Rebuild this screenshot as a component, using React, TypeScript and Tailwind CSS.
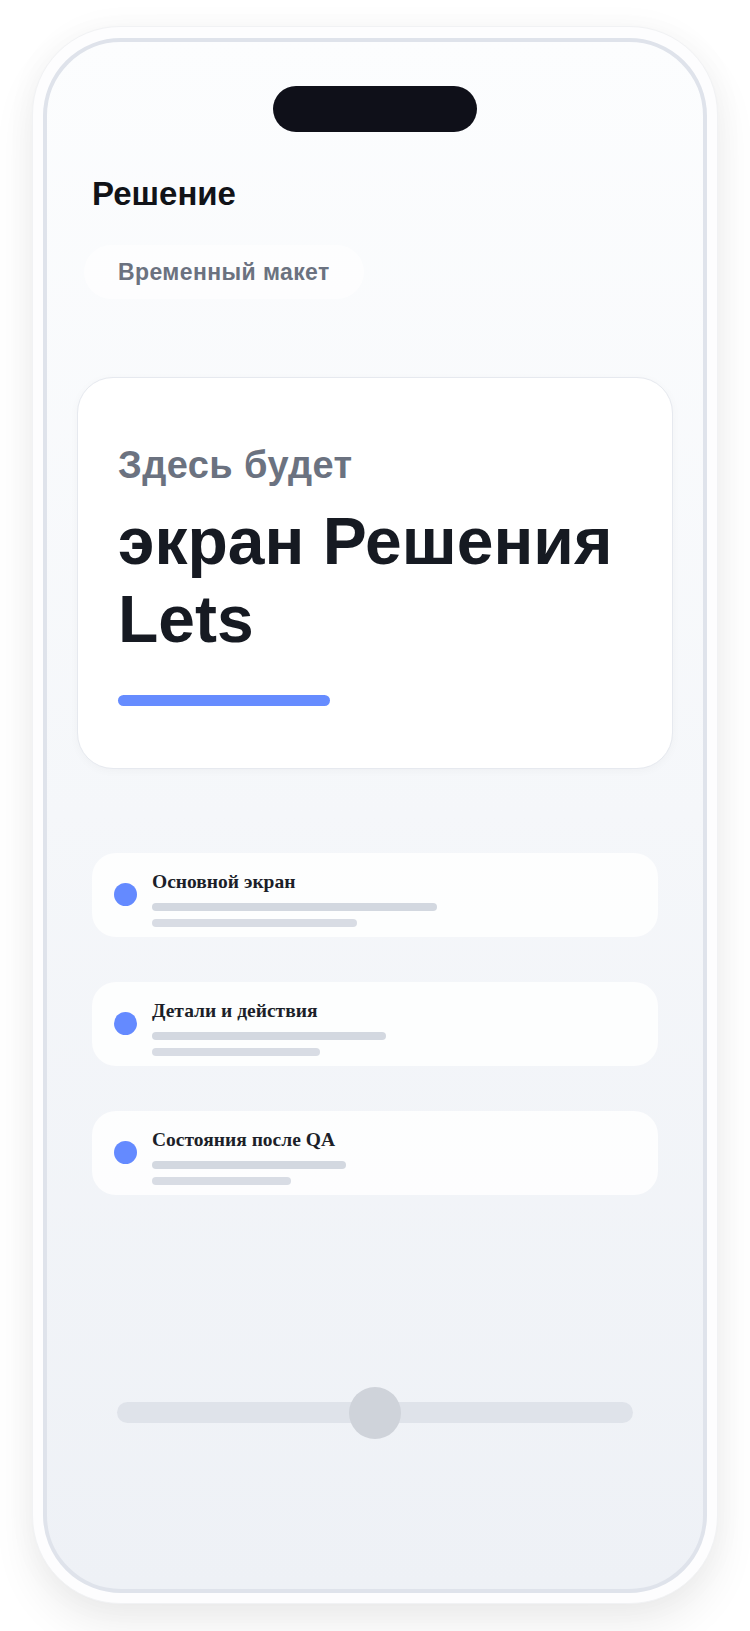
const rows = [
  { title: "Основной экран", a: 285, b: 205 },
  { title: "Детали и действия", a: 234, b: 168 },
  { title: "Состояния после QA", a: 194, b: 139 },
];

export default function App() {
  return (
    <div className="min-h-[1631px] w-[750px] bg-white flex justify-center pt-[26px] font-['Liberation_Sans',Arial,sans-serif]">
      {/* Phone shell */}
      <div className="w-[686px] h-[1578px] rounded-[88px] bg-[#fdfdfe] border border-[#f1f2f4] pt-[11px] pb-[10px] px-[10px] shadow-[0_22px_44px_rgba(0,0,0,0.07),0_0_32px_rgba(0,0,0,0.035)]">
        {/* Screen */}
        <div className="h-full w-full rounded-[78px] border-4 border-[#dfe3eb] bg-gradient-to-b from-[#fcfdfe] to-[#eef1f6] px-[45px] flex flex-col">
          {/* Island */}
          <div className="mt-[44px] self-center w-[204px] h-[46px] rounded-full bg-[#0f1019]" />

          <h1 className="mt-[44px] text-[33px] leading-[36px] font-bold text-[#111318]">Решение</h1>

          <div className="mt-[33px] -ml-[8px] self-start h-[54px] px-[34px] flex items-center rounded-full bg-white/60">
            <span className="text-[23px] tracking-[0.4px] font-bold text-[#6b7280]">Временный макет</span>
          </div>

          {/* Hero card */}
          <div className="mt-[78px] -mx-[15px] rounded-[36px] border border-[#e6e9ef] bg-white px-[40px] pt-[65px] pb-[62px] shadow-[0_2px_10px_rgba(15,23,42,0.03)]">
            <p className="text-[38px] leading-[1.2] tracking-[0.4px] font-bold text-[#6b7280]">Здесь будет</p>
            <p className="mt-[13px] text-[66px] leading-[78px] font-bold text-[#161a22]">экран Решения Lets</p>
            <div className="mt-[37px] w-[212px] h-[11px] rounded-full bg-[#668cff]" />
          </div>

          {/* Rows */}
          <div className="mt-[84px] flex flex-col gap-[45px]">
            {rows.map((r) => (
              <div key={r.title} className="h-[84px] rounded-[24px] bg-white/85 px-[22px] flex items-center gap-[15px]">
                <div className="w-[23px] h-[23px] shrink-0 rounded-full bg-[#648aff]" />
                <div className="mt-[9px] flex flex-col">
                  <span className="font-['Liberation_Serif',serif] text-[19.5px] leading-[20px] font-bold text-[#1c1f29]">
                    {r.title}
                  </span>
                  <div className="mt-[11px] h-[8px] rounded-full bg-[#d3d8e0]" style={{ width: r.a }} />
                  <div className="mt-[8px] h-[8px] rounded-full bg-[#d8dce4]" style={{ width: r.b }} />
                </div>
              </div>
            ))}
          </div>

          {/* Slider */}
          <div className="mt-[192px] mx-[25px] h-[52px] relative flex items-center">
            <div className="w-full h-[21px] rounded-full bg-[#dfe3ea]" />
            <div className="absolute left-1/2 top-0 -translate-x-1/2 w-[52px] h-[52px] rounded-full bg-[#cfd3da]" />
          </div>
        </div>
      </div>
    </div>
  );
}
